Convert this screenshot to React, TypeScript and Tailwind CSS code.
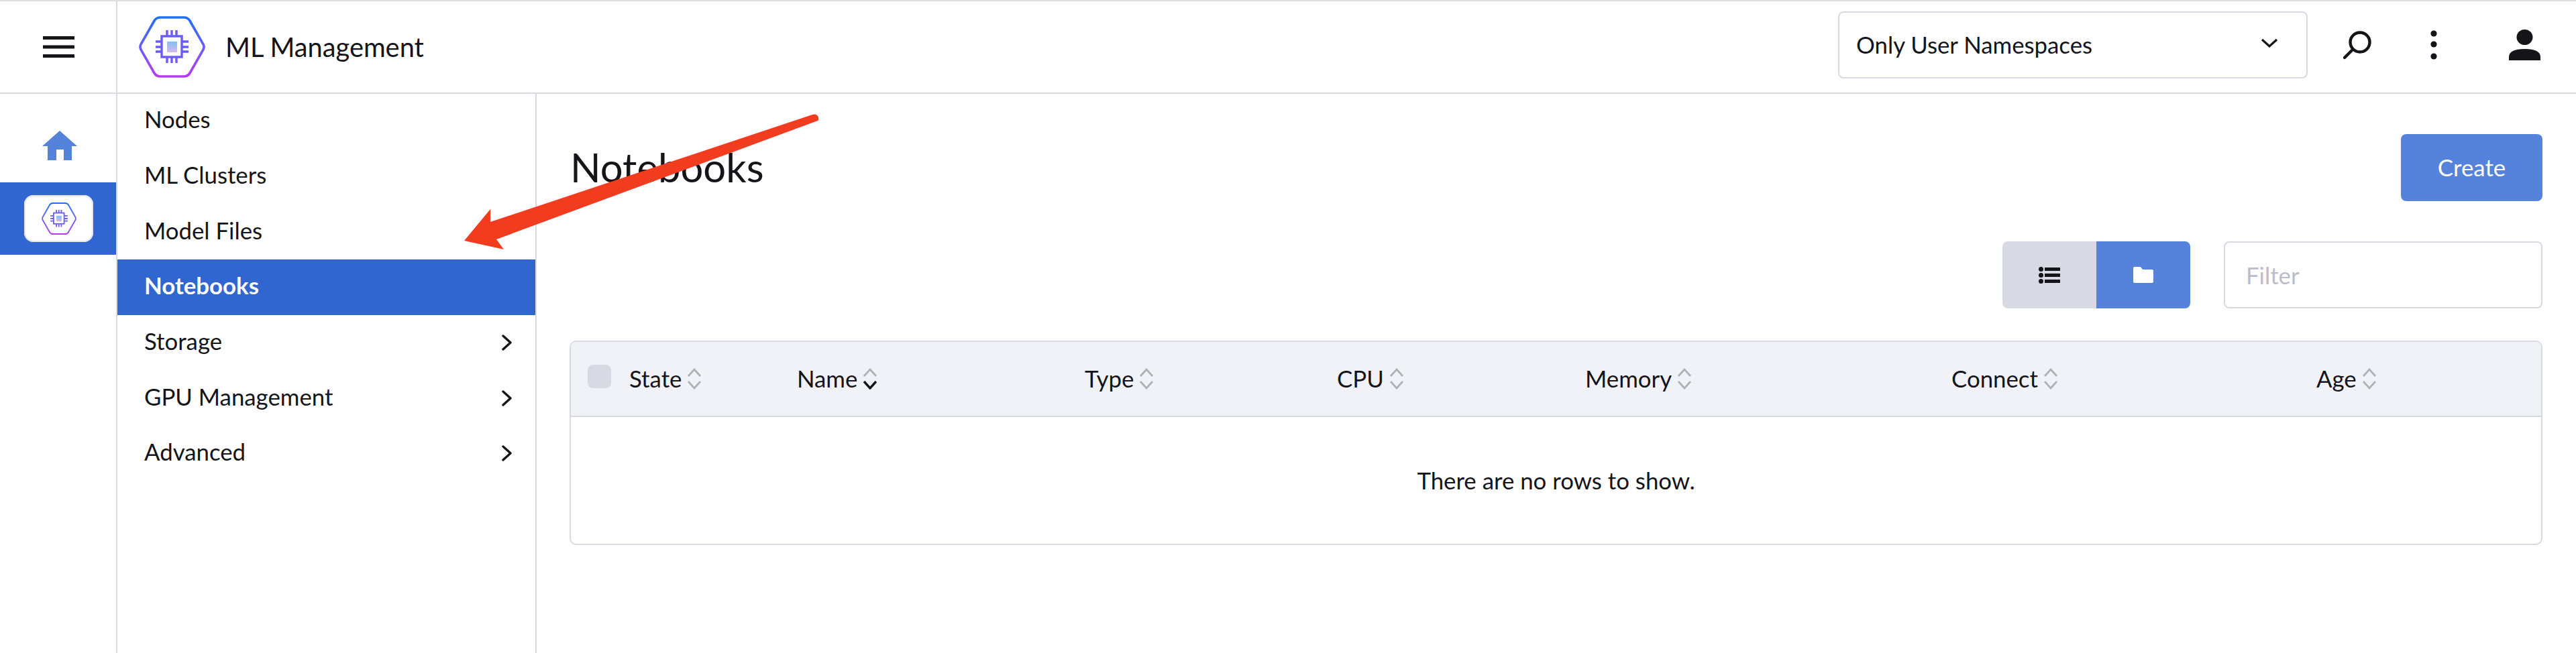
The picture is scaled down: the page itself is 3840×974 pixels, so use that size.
import React from 'react';

const BORDER = 'border-[#d8dae3]';

// Hexagon chip logo, used in the header and in the rail
const ChipLogo = ({ id, className }: { id: string; className: string }) => (
  <svg viewBox="-3 -3 103 94" className={className} fill="none">
    <defs>
      <linearGradient id={`${id}-hex`} x1="0" y1="0" x2="0" y2="1">
        <stop offset="0" stopColor="#1c6ff6" />
        <stop offset="0.5" stopColor="#6a5cf5" />
        <stop offset="1" stopColor="#b63cf0" />
      </linearGradient>
      <linearGradient id={`${id}-core`} x1="0" y1="0" x2="0" y2="1">
        <stop offset="0" stopColor="#7cc2f6" />
        <stop offset="1" stopColor="#dcb6f2" />
      </linearGradient>
    </defs>
    <path
      d="M31 0H66Q72 0 75 5L95 40Q97 44 95 48L75 83Q72 88 66 88H31Q25 88 22 83L2 48Q0 44 2 40L22 5Q25 0 31 0Z"
      stroke={`url(#${id}-hex)`}
      strokeWidth="3.6"
    />
    <rect x="33" y="28" width="30" height="31" stroke="#6a5cf5" strokeWidth="3.4" />
    <rect x="41" y="36" width="15" height="16" fill={`url(#${id}-core)`} />
    <path
      d="M41 19V27M48 19V27M55 19V27M41 60V68M48 60V68M55 60V68M24 36H32M24 44H32M24 51H32M64 36H73M64 44H73M64 51H73"
      stroke="#6a5cf5"
      strokeWidth="3.4"
    />
  </svg>
);

const SortIcon = ({ active }: { active?: boolean }) => (
  <svg viewBox="0 0 22 32" className="ml-[8px] h-[32px] w-[22px] shrink-0" fill="none" strokeWidth="2.8">
    <path d="M2 12L11 2L20 12" stroke="#b0b1b5" />
    <path d="M2 20L11 30L20 20" stroke={active ? '#141419' : '#b0b1b5'} strokeWidth={active ? 3.4 : 2.8} />
  </svg>
);

const NavChevron = () => (
  <svg viewBox="0 0 15 24" className="h-[24px] w-[15px]" fill="none" stroke="#141419" strokeWidth="3.4" strokeLinecap="round" strokeLinejoin="round">
    <path d="M2 2L13 12L2 22" />
  </svg>
);

const NavItem = ({ label, active, more }: { label: string; active?: boolean; more?: boolean }) => (
  <div
    className={`flex h-[82.67px] items-center justify-between pl-[40px] pr-[35px] ${
      active ? 'bg-[#3165d0] font-bold text-white' : 'text-[#141419]'
    }`}
  >
    <span className="mb-[3px]">{label}</span>
    {more && <NavChevron />}
  </div>
);

const columns = ['State', 'Name', 'Type', 'CPU', 'Memory', 'Connect', 'Age'];

export default function App() {
  return (
    <div className="relative flex h-screen w-full flex-col overflow-hidden bg-white font-['Lato','Liberation_Sans',sans-serif] text-[34.8px] leading-none text-[#141419]">
      {/* Header */}
      <header className={`flex h-[140px] shrink-0 items-stretch border-t-2 border-b-2 border-t-[#dddfe4] ${BORDER}`}>
        <div className={`flex w-[175px] shrink-0 items-center border-r-2 pl-[64px] ${BORDER}`}>
          <svg viewBox="0 0 47 32" className="h-[32px] w-[47px]" fill="#141419">
            <rect y="0" width="47" height="5" />
            <rect y="13.5" width="47" height="5" />
            <rect y="27" width="47" height="5" />
          </svg>
        </div>
        <div className="flex items-center pl-[30px]">
          <ChipLogo id="top" className="h-[94px] w-[103px]" />
          <span className="ml-[28px] text-[39.8px]">ML Management</span>
        </div>
        <div className="ml-auto flex items-center pb-[6px]">
          <div className={`flex h-[100px] w-[700px] items-center justify-between rounded-[8px] border-2 pl-[25px] pr-[42px] ${BORDER}`}>
            <span>Only User Namespaces</span>
            <svg viewBox="0 0 26 14" className="mb-[6px] h-[14px] w-[26px]" fill="none" stroke="#141419" strokeWidth="3.2">
              <path d="M2 2L13 12L24 2" />
            </svg>
          </div>
          <svg viewBox="0 0 42 44" className="ml-[53px] h-[44px] w-[42px]" fill="none" stroke="#141419" strokeWidth="4.4" strokeLinecap="round">
            <circle cx="25" cy="18" r="14.5" />
            <path d="M14 29L2 41" />
          </svg>
          <svg viewBox="0 0 10 44" className="ml-[88px] h-[44px] w-[10px]" fill="#141419">
            <circle cx="5" cy="5" r="4.6" />
            <circle cx="5" cy="21" r="4.6" />
            <circle cx="5" cy="39" r="4.6" />
          </svg>
          <svg viewBox="0 0 47 46" className="ml-[107px] mr-[53px] h-[46px] w-[47px]" fill="#141419">
            <ellipse cx="23.5" cy="11.5" rx="12" ry="11.5" />
            <path d="M0 46V41C0 33 8 29 23.5 29C39 29 47 33 47 41V46Z" />
          </svg>
        </div>
      </header>

      <div className="flex min-h-0 flex-1">
        {/* Icon rail */}
        <aside className={`w-[175px] shrink-0 border-r-2 ${BORDER}`}>
          <div className="flex h-[132px] items-center justify-center pl-[5px] pt-[22px]">
            <svg viewBox="0 0 52 44" className="h-[44px] w-[52px]" fill="#5582db">
              <path d="M26 0L52 23H44V44H32V28H21V44H8V23H0Z" />
            </svg>
          </div>
          <div className="flex h-[108px] items-center justify-center bg-[#3165d0] pl-[2px]">
            <div className="flex h-[70px] w-[103px] items-center justify-center rounded-[14px] bg-white shadow-[inset_0_0_0_2px_#e4e6ee]">
              <ChipLogo id="rail" className="h-[50px] w-[54px]" />
            </div>
          </div>
        </aside>

        {/* Second level nav */}
        <nav className={`w-[625px] shrink-0 border-r-2 ${BORDER}`}>
          <div className="-mt-px">
            <NavItem label="Nodes" />
            <NavItem label="ML Clusters" />
            <NavItem label="Model Files" />
            <NavItem label="Notebooks" active />
            <NavItem label="Storage" more />
            <NavItem label="GPU Management" more />
            <NavItem label="Advanced" more />
          </div>
        </nav>

        {/* Main */}
        <main className="min-w-0 flex-1 pl-[49px] pr-[50px] pt-[60px]">
          <div className="flex h-[100px] items-center justify-between">
            <h1 className="pl-[1px] text-[59.8px] font-normal">Notebooks</h1>
            <button className="h-[100px] w-[211px] rounded-[8px] bg-[#5582db] text-white">Create</button>
          </div>

          <div className="mt-[60px] flex h-[100px] justify-end">
            <div className="flex w-[280px] overflow-hidden rounded-[8px]">
              <div className="flex flex-1 items-center justify-center bg-[#d8dae3]">
                <svg viewBox="0 0 32 25" className="h-[25px] w-[32px]" fill="#141419">
                  <circle cx="3.5" cy="3.5" r="3.5" />
                  <circle cx="3.5" cy="12.5" r="3.5" />
                  <circle cx="3.5" cy="21.5" r="3.5" />
                  <rect x="9" y="1" width="23" height="5" />
                  <rect x="9" y="10" width="23" height="5" />
                  <rect x="9" y="19" width="23" height="5" />
                </svg>
              </div>
              <div className="flex flex-1 items-center justify-center bg-[#5582db]">
                <svg viewBox="0 0 30 24" className="h-[24px] w-[30px]" fill="#ffffff">
                  <path d="M2 0H11L14 4H28Q30 4 30 6V22Q30 24 28 24H2Q0 24 0 22V2Q0 0 2 0Z" />
                </svg>
              </div>
            </div>
            <input
              placeholder="Filter"
              className={`ml-[50px] h-[100px] w-[475px] rounded-[8px] border-2 px-[31px] outline-none placeholder:text-[#bbbdcd] ${BORDER}`}
            />
          </div>

          <div className={`mt-[48px] h-[305px] overflow-hidden rounded-[10px] border-2 ${BORDER}`}>
            <div className={`grid h-[112px] grid-cols-[87px_250px_429px_376px_370px_546px_544px_1fr] items-center border-b-2 bg-[#f1f2f7] ${BORDER}`}>
              <div className="pl-[25px]">
                <div className="mb-[7px] h-[35px] w-[35px] rounded-[8px] bg-[#d8dae3]" />
              </div>
              {columns.map((name) => (
                <div key={name} className="flex items-center">
                  <span>{name}</span>
                  <SortIcon active={name === 'Name'} />
                </div>
              ))}
            </div>
            <div className="flex h-[189px] items-center justify-center pt-[2px]">There are no rows to show.</div>
          </div>
        </main>
      </div>

      {/* Red annotation arrow drawn over the screenshot */}
      <svg className="pointer-events-none absolute left-0 top-0 h-[974px] w-[3840px]" viewBox="0 0 3840 974">
        <path
          d="M692 359L731 312L731 331L1211 171Q1218 169 1220 175Q1221 179 1219 180L740 357L751 372Z"
          fill="#f23c1f"
        />
      </svg>
    </div>
  );
}
